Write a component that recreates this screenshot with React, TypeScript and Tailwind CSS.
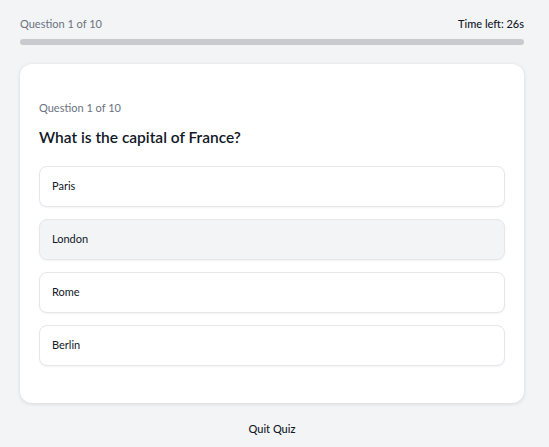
import React from "react";

export default function App() {
  const options = ["Paris", "London", "Rome", "Berlin"];
  return (
    <div
      className="min-h-screen bg-[#f3f4f6] pl-5 pr-[25px] pt-4 pb-4 text-[#111827]"
      style={{ fontFamily: 'Lato, "Noto Sans", sans-serif' }}
    >
      <div className="flex items-center justify-between text-[11px] leading-4">
        <span className="text-[#6b7280]">Question 1 of 10</span>
        <span className="font-medium text-[#111827]">Time left: 26s</span>
      </div>
      <div className="mt-[7px] h-1.5 w-full rounded-full bg-[#c9cacd]" />
      <div className="mt-[19px] rounded-xl bg-white px-[19px] pt-[36px] pb-[37px] shadow-[0_1px_4px_rgba(0,0,0,0.12)]">
        <div className="text-[11px] leading-4 text-[#6b7280]">Question 1 of 10</div>
        <h2 className="mt-[9px] text-[15.5px] leading-6 font-semibold text-[#111827]">
          What is the capital of France?
        </h2>
        <div className="mt-[17px] flex flex-col gap-3">
          {options.map((o, i) => (
            <button
              key={o}
              className={`w-full rounded-lg border border-[#e5e7eb] px-3 pt-[11px] pb-[13px] text-left text-[11px] leading-[15px] text-[#111827] shadow-[0_1px_2px_rgba(0,0,0,0.05)] ${
                i === 1 ? "bg-[#f3f4f6]" : "bg-white"
              }`}
            >
              {o}
            </button>
          ))}
        </div>
      </div>
      <div className="mt-[18px] flex justify-center">
        <button className="text-[11px] leading-4 font-medium text-[#111827]">Quit Quiz</button>
      </div>
    </div>
  );
}
